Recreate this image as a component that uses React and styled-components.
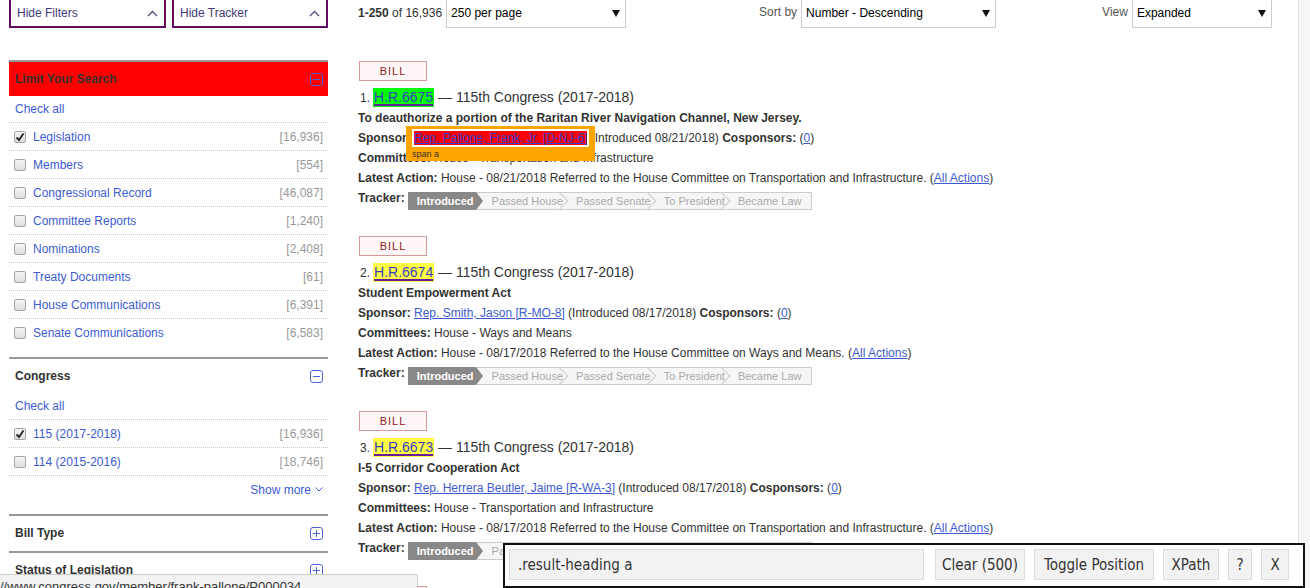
import React from "react";
import styled, { createGlobalStyle } from "styled-components";

const LINK = "#3d5bd3";

const GlobalStyle = createGlobalStyle`
  html, body {
    margin: 0;
    padding: 0;
    background: #fff;
    overflow: hidden;
  }
  body {
    font-family: "Liberation Sans", Arial, sans-serif;
    font-size: 12px;
    color: #333;
  }
`;

const TYPES = [
  ["Legislation", "16,936", true],
  ["Members", "554"],
  ["Congressional Record", "46,087"],
  ["Committee Reports", "1,240"],
  ["Nominations", "2,408"],
  ["Treaty Documents", "61"],
  ["House Communications", "6,391"],
  ["Senate Communications", "6,583"],
];

const CONGRESSES = [
  ["115 (2017-2018)", "16,936", true],
  ["114 (2015-2016)", "18,746"],
];

const RESULTS = [
  {
    n: 1,
    bill: "H.R.6675",
    mark: "#00ff00",
    title: "To deauthorize a portion of the Raritan River Navigation Channel, New Jersey.",
    sponsor: "Rep. Pallone, Frank, Jr. [D-NJ-6]",
    date: "08/21/2018",
    committees: "House - Transportation and Infrastructure",
    action: "House - 08/21/2018 Referred to the House Committee on Transportation and Infrastructure.",
    picked: true,
  },
  {
    n: 2,
    bill: "H.R.6674",
    mark: "#ffff44",
    title: "Student Empowerment Act",
    sponsor: "Rep. Smith, Jason [R-MO-8]",
    date: "08/17/2018",
    committees: "House - Ways and Means",
    action: "House - 08/17/2018 Referred to the House Committee on Ways and Means.",
  },
  {
    n: 3,
    bill: "H.R.6673",
    mark: "#ffff44",
    title: "I-5 Corridor Cooperation Act",
    sponsor: "Rep. Herrera Beutler, Jaime [R-WA-3]",
    date: "08/17/2018",
    committees: "House - Transportation and Infrastructure",
    action: "House - 08/17/2018 Referred to the House Committee on Transportation and Infrastructure.",
  },
  {
    n: 4,
    bill: "H.R.6672",
    mark: "#ffff44",
    title: "",
    sponsor: "",
    date: "",
    committees: "",
    action: "",
  },
];

const STAGES = ["Introduced", "Passed House", "Passed Senate", "To President", "Became Law"];

/* ---------- icons ---------- */

const BoxIcon = ({ plus }) => (
  <svg width="13" height="13" viewBox="0 0 13 13">
    <rect x="0.5" y="0.5" width="12" height="12" rx="2.5" fill="none" stroke="#5063d2" />
    <line x1="3" y1="6.5" x2="10" y2="6.5" stroke="#5063d2" />
    {plus && <line x1="6.5" y1="3" x2="6.5" y2="10" stroke="#5063d2" />}
  </svg>
);

const ChevronUp = () => (
  <svg width="11" height="7" viewBox="0 0 11 7">
    <polyline points="1,6 5.5,1.5 10,6" fill="none" stroke="#5a4a80" strokeWidth="1.4" />
  </svg>
);

const ChevronDown = () => (
  <svg width="8" height="5" viewBox="0 0 8 5">
    <polyline points="0.5,0.5 4,4 7.5,0.5" fill="none" stroke={LINK} strokeWidth="1" />
  </svg>
);

const Check = () => (
  <svg width="10" height="10" viewBox="0 0 10 10">
    <polyline points="1.5,5.5 4,8 8.5,1.5" fill="none" stroke="#222" strokeWidth="1.8" />
  </svg>
);

/* ---------- sidebar ---------- */

const Sidebar = styled.aside`
  width: 319px;
  flex-shrink: 0;
`;

const ToggleRow = styled.div`
  display: flex;
  gap: 6px;
  margin-bottom: 32px;
`;

const ToggleButton = styled.button`
  width: ${(p) => p.$w}px;
  height: 30px;
  box-sizing: border-box;
  display: flex;
  align-items: center;
  justify-content: space-between;
  padding: 0 6px 0 6px;
  background: #fff;
  border: 2px solid #650a65;
  font-family: inherit;
  font-size: 12px;
  color: #443a78;
  cursor: pointer;
`;

const Panel = styled.section`
  border-top: 2px solid #999;
  padding-bottom: ${(p) => p.$pb || 0}px;
`;

const PanelHead = styled.div`
  height: 34px;
  display: flex;
  align-items: center;
  justify-content: space-between;
  padding: 0 5px 0 6px;
  background: ${(p) => p.$bg || "transparent"};
`;

const PanelTitle = styled.h3`
  margin: 0;
  font-size: 12px;
  font-weight: bold;
  color: #333;
`;

const CheckAll = styled.div`
  height: 26px;
  display: flex;
  align-items: center;
  padding-left: 6px;
  color: ${LINK};
  padding-bottom: 1px;
  box-sizing: border-box;
`;

const FacetRow = styled.div`
  height: 28px;
  box-sizing: border-box;
  border-top: 1px dotted #c8c8c8;
  display: flex;
  align-items: center;
  padding: 0 5px;
  justify-content: ${(p) => (p.$end ? "flex-end" : "flex-start")};
  color: ${LINK};
  gap: 4px;
`;

const CheckBox = styled.span`
  width: 12px;
  height: 12px;
  box-sizing: border-box;
  border: 1px solid #a6a6a6;
  border-radius: 2px;
  background: linear-gradient(#f6f6f6, #dedede);
  display: flex;
  align-items: center;
  justify-content: center;
  margin-right: 3px;
`;

const FacetLabel = styled.span`
  flex: 1;
  color: ${LINK};
`;

const FacetCount = styled.span`
  color: #999;
`;

const Facet = ({ label, count, checked }) => (
  <FacetRow>
    <CheckBox>{checked && <Check />}</CheckBox>
    <FacetLabel>{label}</FacetLabel>
    <FacetCount>[{count}]</FacetCount>
  </FacetRow>
);

const FilterSidebar = () => (
  <Sidebar>
    <ToggleRow>
      <ToggleButton $w={157}>
        Hide Filters
        <ChevronUp />
      </ToggleButton>
      <ToggleButton $w={156}>
        Hide Tracker
        <ChevronUp />
      </ToggleButton>
    </ToggleRow>

    <Panel $pb={11}>
      <PanelHead $bg="#ff0000">
        <PanelTitle>Limit Your Search</PanelTitle>
        <BoxIcon />
      </PanelHead>
      <CheckAll>Check all</CheckAll>
      {TYPES.map(([label, count, checked]) => (
        <Facet key={label} label={label} count={count} checked={checked} />
      ))}
    </Panel>

    <Panel $pb={11}>
      <PanelHead>
        <PanelTitle>Congress</PanelTitle>
        <BoxIcon />
      </PanelHead>
      <CheckAll>Check all</CheckAll>
      {CONGRESSES.map(([label, count, checked]) => (
        <Facet key={label} label={label} count={count} checked={checked} />
      ))}
      <FacetRow $end>
        Show more <ChevronDown />
      </FacetRow>
    </Panel>

    <Panel $pb={1}>
      <PanelHead>
        <PanelTitle>Bill Type</PanelTitle>
        <BoxIcon plus />
      </PanelHead>
    </Panel>

    <Panel>
      <PanelHead>
        <PanelTitle>Status of Legislation</PanelTitle>
        <BoxIcon plus />
      </PanelHead>
    </Panel>
  </Sidebar>
);

/* ---------- top bar ---------- */

const Main = styled.main`
  flex: 1;
  min-width: 0;
`;

const TopBar = styled.div`
  height: 30px;
  display: flex;
  align-items: center;
`;

const Group = styled.div`
  display: flex;
  align-items: center;
  gap: ${(p) => p.$gap}px;
  margin-left: ${(p) => p.$ml || 0}px;
`;

const Label = styled.span`
  color: #555;
  margin-top: -2px;
`;

const Select = styled.div`
  width: ${(p) => p.$w}px;
  height: 30px;
  box-sizing: border-box;
  border: 1px solid #ccc;
  display: flex;
  align-items: center;
  justify-content: space-between;
  padding: 0 5px 0 4px;
  color: #000;
  font-size: 12px;
`;

const Arrow = styled.span`
  width: 0;
  height: 0;
  border-left: 4px solid transparent;
  border-right: 4px solid transparent;
  border-top: 7px solid #111;
`;

/* ---------- results ---------- */

const ResultList = styled.div`
  margin-top: 33px;
`;

const Result = styled.article`
  margin-bottom: 22px;
`;

const Badge = styled.div`
  width: 68px;
  height: 20px;
  box-sizing: border-box;
  border: 1px solid #d29a9a;
  background: #fff7f7;
  color: #8b1a1a;
  font-size: 11px;
  letter-spacing: 1px;
  display: flex;
  align-items: center;
  justify-content: center;
  margin-left: 1px;
`;

const Heading = styled.div`
  margin-top: 6px;
  height: 21px;
  line-height: 20px;
  font-size: 14px;
  color: #333;
  white-space: nowrap;
`;

const Num = styled.span`
  font-size: 12px;
  margin: 0 3px 0 2px;
`;

const Mark = styled.span`
  background: ${(p) => p.$color};
  padding: 1px 1px 2px;
`;

const BillLink = styled.a`
  color: #3a3dc2;
  text-decoration: underline;
  text-decoration-color: #6a1b9a;
  text-decoration-thickness: 2px;
  text-underline-offset: 2px;
`;

const Line = styled.div`
  height: 20px;
  line-height: 20px;
  font-size: 12px;
  white-space: nowrap;
`;

const Strong = styled.b`
  font-weight: bold;
`;

const Link = styled.a`
  color: ${LINK};
  text-decoration: underline;
`;

const Picked = styled.span`
  position: relative;
`;

const PickedBox = styled.span`
  position: absolute;
  left: -8px;
  right: -8px;
  top: -5px;
  height: 35px;
  background: #ffa500;
  z-index: 1;
`;

const PickedLabel = styled.span`
  position: absolute;
  left: 6px;
  bottom: 1px;
  font-size: 9px;
  line-height: 12px;
  color: #333;
`;

const PickedLink = styled.a`
  position: relative;
  z-index: 2;
  background: #ff0000;
  box-shadow: 0 0 0 2px #fff;
  color: #2f3fd0;
  text-decoration: underline;
`;

const TrackerRow = styled.div`
  display: flex;
  align-items: flex-start;
  height: 26px;
  line-height: 20px;
`;

const TrackerBar = styled.div`
  display: flex;
  height: 16px;
  margin: 4px 0 0 3px;
  border: 1px solid #ccc;
  background: #f6f6f6;
  line-height: 16px;
`;

const Stage = styled.span`
  position: relative;
  display: flex;
  align-items: center;
  font-size: 11px;
  white-space: nowrap;
  color: ${(p) => (p.$done ? "#fff" : "#aaa")};
  font-weight: ${(p) => (p.$done ? "bold" : "normal")};
  background: ${(p) => (p.$done ? "#888" : "transparent")};
  margin: ${(p) => (p.$done ? "-1px 7px -1px -1px" : "0")};
  padding: ${(p) => (p.$done ? "0 2px 1px 9px" : p.$last ? "0 10px 0 9px" : "0 4px 0 9px")};

  &::after {
    content: "";
    position: absolute;
    ${(p) =>
      p.$done
        ? `
      left: 100%;
      top: 0;
      border-top: 9px solid transparent;
      border-bottom: 9px solid transparent;
      border-left: 7px solid #888;
    `
        : p.$last
        ? `display: none;`
        : `
      right: 1px;
      top: 2px;
      width: 11px;
      height: 11px;
      border-top: 1px solid #ccc;
      border-right: 1px solid #ccc;
      transform: rotate(45deg);
    `}
  }
`;

const Tracker = () => (
  <TrackerRow>
    <Strong>Tracker:</Strong>
    <TrackerBar>
      {STAGES.map((s, i) => (
        <Stage key={s} $done={i === 0} $last={i === STAGES.length - 1}>
          {s}
        </Stage>
      ))}
    </TrackerBar>
  </TrackerRow>
);

const ResultItem = ({ r }) => (
  <Result>
    <Badge>BILL</Badge>
    <Heading>
      <Num>{r.n}.</Num>
      <Mark $color={r.mark}>
        <BillLink>{r.bill}</BillLink>
      </Mark>{" "}
      — 115th Congress (2017-2018)
    </Heading>
    <Line>
      <Strong>{r.title}</Strong>
    </Line>
    <Line>
      <Strong>Sponsor:</Strong>{" "}
      {r.picked ? (
        <Picked>
          <PickedBox>
            <PickedLabel>span a</PickedLabel>
          </PickedBox>
          <PickedLink>{r.sponsor}</PickedLink>
        </Picked>
      ) : (
        <Link>{r.sponsor}</Link>
      )}{" "}
      (Introduced {r.date}) <Strong>Cosponsors:</Strong> (<Link>0</Link>)
    </Line>
    <Line>
      <Strong>Committees:</Strong> {r.committees}
    </Line>
    <Line>
      <Strong>Latest Action:</Strong> {r.action} (<Link>All Actions</Link>)
    </Line>
    <Tracker />
  </Result>
);

/* ---------- overlays ---------- */

const Toolbar = styled.div`
  position: fixed;
  left: 503px;
  right: 5px;
  top: 543px;
  height: 45px;
  box-sizing: border-box;
  border: 2px solid #111;
  background: #fff;
  display: flex;
  align-items: flex-start;
  gap: 9px;
  padding: 4px 0 0 4px;
  font-family: "Liberation Sans Narrow", "DejaVu Sans Condensed", "Arial Narrow", sans-serif;
  font-size: 15px;
  color: #333;
  z-index: 10;
`;

const SelectorInput = styled.div`
  width: 415px;
  height: 31px;
  box-sizing: border-box;
  background: #f2f2f2;
  border: 1px solid #ddd;
  display: flex;
  align-items: center;
  padding-left: 8px;
  margin-right: 2px;
`;

const ToolButton = styled.div`
  width: ${(p) => p.$w}px;
  height: 31px;
  box-sizing: border-box;
  background: #f2f2f2;
  border: 1px solid #ddd;
  display: flex;
  align-items: center;
  justify-content: center;
`;

const StatusBar = styled.div`
  position: fixed;
  left: 0;
  top: 574px;
  width: 418px;
  height: 20px;
  box-sizing: border-box;
  background: #f3f3f3;
  border-top: 1px solid #ccc;
  border-right: 1px solid #ccc;
  border-top-right-radius: 3px;
  padding: 4px 0 0 0;
  font-size: 13px;
  line-height: 15px;
  color: #333;
  white-space: nowrap;
  overflow: hidden;
  z-index: 10;
`;

/* ---------- page ---------- */

const Viewport = styled.div`
  display: flex;
  width: 1310px;
  height: 588px;
  overflow: hidden;
`;

const Page = styled.div`
  flex: 1;
  min-width: 0;
  display: flex;
  gap: 30px;
  padding-left: 9px;
  margin-top: -2px;
`;

const Scrollbar = styled.div`
  width: 11px;
  flex-shrink: 0;
  background: #f6f6f6;
  border-left: 1px solid #e3e3e3;
`;

export default function App() {
  return (
    <>
      <GlobalStyle />
      <Viewport>
        <Page>
          <FilterSidebar />
          <Main>
            <TopBar>
              <Group $gap={4}>
                <span>
                  <Strong>1-250</Strong> of 16,936
                </span>
                <Select $w={180}>
                  250 per page
                  <Arrow />
                </Select>
              </Group>
              <Group $gap={4} $ml={133}>
                <Label>Sort by</Label>
                <Select $w={195}>
                  Number - Descending
                  <Arrow />
                </Select>
              </Group>
              <Group $gap={4} $ml={106}>
                <Label>View</Label>
                <Select $w={140}>
                  Expanded
                  <Arrow />
                </Select>
              </Group>
            </TopBar>
            <ResultList>
              {RESULTS.map((r) => (
                <ResultItem key={r.bill} r={r} />
              ))}
            </ResultList>
          </Main>
        </Page>
        <Scrollbar />
      </Viewport>
      <StatusBar>//www.congress.gov/member/frank-pallone/P000034</StatusBar>
      <Toolbar>
        <SelectorInput>.result-heading a</SelectorInput>
        <ToolButton $w={90}>Clear (500)</ToolButton>
        <ToolButton $w={120}>Toggle Position</ToolButton>
        <ToolButton $w={56}>XPath</ToolButton>
        <ToolButton $w={24}>?</ToolButton>
        <ToolButton $w={28}>X</ToolButton>
      </Toolbar>
    </>
  );
}
